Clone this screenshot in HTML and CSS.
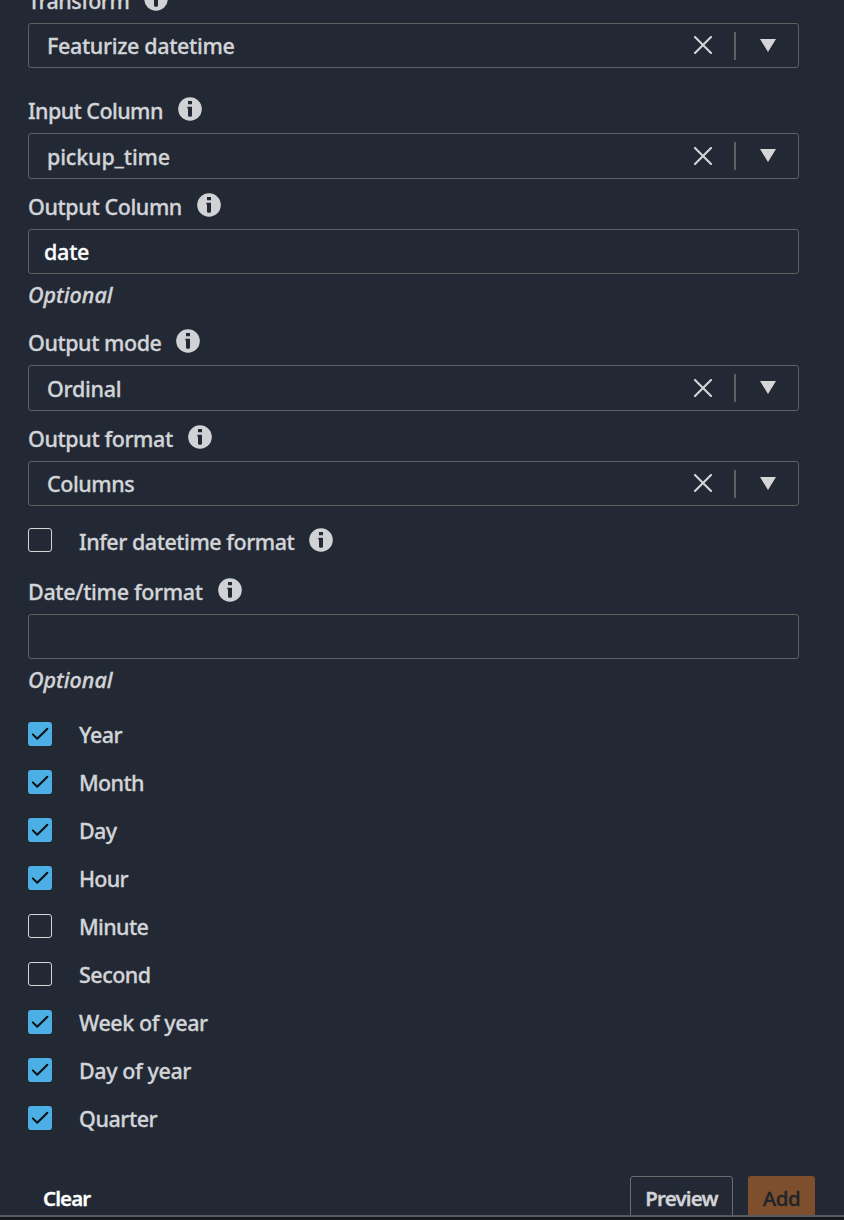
FILE: index.html
```
<!DOCTYPE html>
<html lang="en">
<head>
<meta charset="utf-8">
<title>Featurize datetime</title>
<link rel="stylesheet" href="styles.css">
</head>
<body>
<svg class="defs" width="0" height="0">
  <symbol id="info" viewBox="0 0 24 24"><circle cx="12" cy="12" r="11.8" fill="#d1d2d6"/><path d="M10 4.1h4v3.1h-4zM9.3 9.8H14V18.5a1.3 1.3 0 0 1-1.3 1.3h-1.4A1.3 1.3 0 0 1 10 18.500V11.400H9.300z" fill="#222935"/></symbol>
  <symbol id="close" viewBox="0 0 18 18"><path d="M1 1l16 16M17 1L1 17" stroke="#d5d5d8" stroke-width="2.1" stroke-linecap="round"/></symbol>
  <symbol id="arrow" viewBox="0 0 16 13"><path d="M0 0h16L8 13z" fill="#d5d5d8"/></symbol>
  <symbol id="check" viewBox="0 0 24 24"><path d="M4.8 12.4l4.4 4.3L19.4 6.8" fill="none" stroke="#0b1016" stroke-width="2" stroke-linecap="round" stroke-linejoin="round"/></symbol>
</svg>
<main class="panel">
  <div class="label first"><span class="t-transform">Transform</span><svg class="info"><use href="#info"/></svg></div>
  <div class="box"><span class="value t-feat">Featurize datetime</span><svg class="close"><use href="#close"/></svg><i class="sep"></i><svg class="arrow"><use href="#arrow"/></svg></div>
  <div class="label gap-29"><span class="t-input">Input Column</span><svg class="info"><use href="#info"/></svg></div>
  <div class="box tall"><span class="value t-pickup">pickup_time</span><svg class="close"><use href="#close"/></svg><i class="sep"></i><svg class="arrow"><use href="#arrow"/></svg></div>
  <div class="label gap-14"><span class="t-outcol">Output Column</span><svg class="info"><use href="#info"/></svg></div>
  <div class="box input"><span class="value t-date">date</span></div>
  <div class="hint"><span>Optional</span></div>
  <div class="label gap-20"><span class="t-mode">Output mode</span><svg class="info"><use href="#info"/></svg></div>
  <div class="box tall"><span class="value t-ord">Ordinal</span><svg class="close"><use href="#close"/></svg><i class="sep"></i><svg class="arrow"><use href="#arrow"/></svg></div>
  <div class="label gap-14"><span class="t-format">Output format</span><svg class="info"><use href="#info"/></svg></div>
  <div class="box"><span class="value t-cols">Columns</span><svg class="close"><use href="#close"/></svg><i class="sep"></i><svg class="arrow"><use href="#arrow"/></svg></div>
  <div class="label gap-22"><i class="checkbox"></i><span class="t-infer">Infer datetime format</span><svg class="info"><use href="#info"/></svg></div>
  <div class="label gap-26"><span class="t-dt">Date/time format</span><svg class="info"><use href="#info"/></svg></div>
  <div class="box input"></div>
  <div class="hint"><span>Optional</span></div>
  <div class="options">
    <div class="option"><svg class="checkbox on"><use href="#check"/></svg><span class="t-year">Year</span></div>
    <div class="option"><svg class="checkbox on"><use href="#check"/></svg><span class="t-month">Month</span></div>
    <div class="option"><svg class="checkbox on"><use href="#check"/></svg><span class="t-day">Day</span></div>
    <div class="option"><svg class="checkbox on"><use href="#check"/></svg><span class="t-hour">Hour</span></div>
    <div class="option"><i class="checkbox"></i><span class="t-minute">Minute</span></div>
    <div class="option"><i class="checkbox"></i><span class="t-second">Second</span></div>
    <div class="option"><svg class="checkbox on"><use href="#check"/></svg><span class="t-week">Week of year</span></div>
    <div class="option"><svg class="checkbox on"><use href="#check"/></svg><span class="t-doy">Day of year</span></div>
    <div class="option"><svg class="checkbox on"><use href="#check"/></svg><span class="t-quarter">Quarter</span></div>
  </div>
  <div class="footer">
    <span class="clear">Clear</span>
    <span class="btn preview">Preview</span>
    <span class="btn add">Add</span>
  </div>
</main>
</body>
</html>
```
FILE: styles.css
```
* { box-sizing: border-box; }
body { margin: 0; background: #16191f; }
.defs { display: block; }
.panel {
  width: 844px; height: 1217px; padding: 0 29px 0 28px; overflow: hidden;
  background: #222935; border-bottom: 2px solid #56595f; color: #d3d4d7;
  font: 500 21.5px/28px "Noto Sans", "Open Sans", sans-serif; white-space: nowrap;
  -webkit-text-stroke: 0.3px currentColor;
}
.label { display: flex; height: 24px; margin-bottom: 12px; align-items: flex-start; }
.first { margin-top: -13px; }
.gap-29 { margin-top: 29px; }
.gap-14 { margin-top: 14px; }
.gap-20 { margin-top: 20px; }
.gap-22 { margin-top: 22px; margin-bottom: 26px; }
.gap-26 { margin-top: 26px; }
.info { width: 24px; height: 24px; margin-left: 15px; }
.box {
  display: flex; align-items: center; width: 771px; height: 45px;
  padding: 0 22px 0 18px; border: 1px solid #605f60; border-radius: 3px;
}
.box.tall { height: 46px; }
.box.tall .value { padding-top: 2px; }
.box.tall .arrow { margin-bottom: 2px; }
.box.input { padding-left: 15px; color: #fff; }
.value { flex: 1; }
.close { width: 20px; height: 18px; }
.box:not(.tall) .close { margin-bottom: 1px; }
.sep { width: 2px; height: 28px; margin: 0 24px 0 21px; background: #605f60; }
.arrow { width: 16px; height: 13px; }
.hint { height: 28px; margin-top: 7px; font-style: italic; }
.checkbox {
  flex: none; width: 24px; height: 24px; margin-right: 27px;
  border: 1px solid #d5d5d8; border-radius: 3px;
}
.checkbox.on { border: 0; background: #4bafe3; }
.options { display: flex; flex-direction: column; gap: 24px; margin-top: 28px; }
.option { display: flex; height: 24px; line-height: 26px; }
.footer { display: flex; height: 45px; margin-top: 46px; font-size: 20.5px; line-height: 45px; }
.clear { margin: 0 auto 0 15px; color: #fff; font-weight: 600; letter-spacing: -0.9px; }
.btn { height: 45px; border-radius: 3px; text-align: center; }
.preview { width: 103px; border: 1px solid #6b6b6d; font-weight: 600; line-height: 43px; letter-spacing: -0.8px; }
.add { width: 67px; margin-left: 15px; background: #7d4f2c; color: #20242b; letter-spacing: -0.5px; }

.t-transform { letter-spacing: -0.55px; }
.t-feat { letter-spacing: -0.35px; }
.t-input { letter-spacing: -0.57px; }
.t-pickup { letter-spacing: -0.15px; }
.t-outcol { letter-spacing: -0.4px; }
.t-date { letter-spacing: -0.25px; }
.t-mode { letter-spacing: -0.45px; }
.t-ord { letter-spacing: -0.3px; }
.t-format { letter-spacing: -0.4px; }
.t-cols { letter-spacing: -0.45px; }
.t-infer { letter-spacing: -0.47px; }
.t-dt { letter-spacing: -0.33px; }
.t-year { letter-spacing: -0.5px; }
.t-month { letter-spacing: -0.65px; }
.t-day { letter-spacing: -0.6px; }
.t-hour { letter-spacing: -0.75px; }
.t-minute { letter-spacing: -0.65px; }
.t-second { letter-spacing: -0.5px; }
.t-week { letter-spacing: -0.4px; }
.t-doy { letter-spacing: -0.4px; }
.t-quarter { letter-spacing: -0.45px; }
```
